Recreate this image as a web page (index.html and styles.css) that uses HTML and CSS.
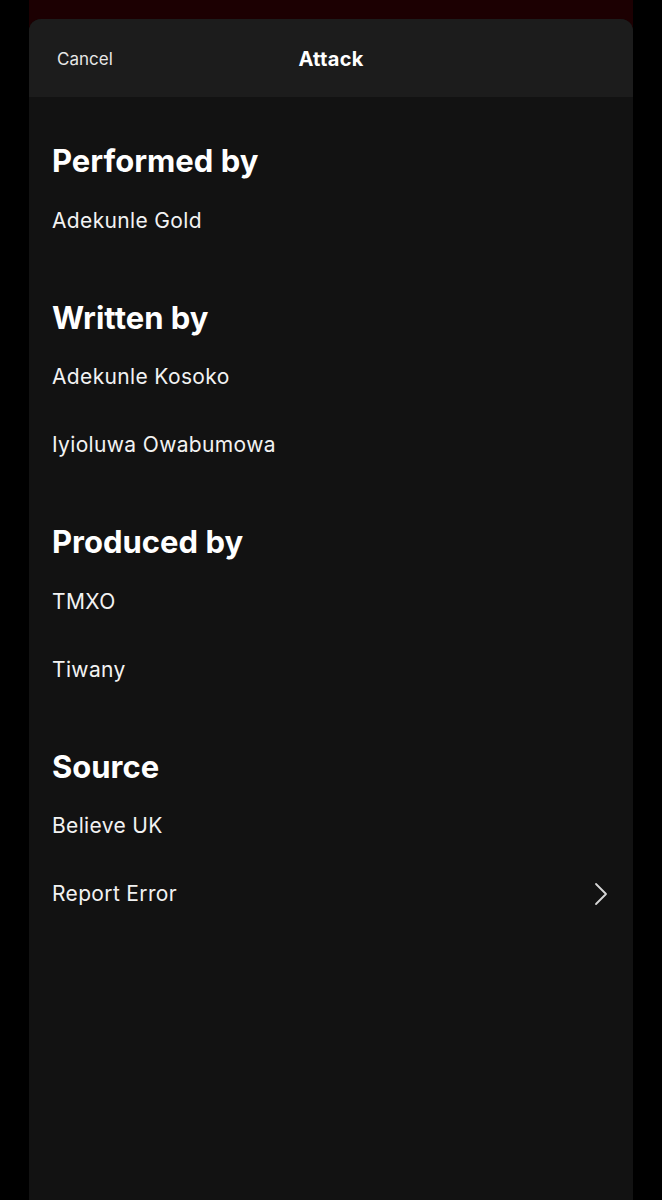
FILE: index.html
```html
<!DOCTYPE html>
<html lang="en">
<head>
<meta charset="utf-8">
<title>Attack – Credits</title>
<link rel="stylesheet" href="styles.css">
</head>
<body>
<div class="page">
  <div class="sheet">
    <header class="sheet-header">
      <span class="cancel">Cancel</span>
      <span class="title">Attack</span>
      <span class="spacer"></span>
    </header>
    <main class="credits">
      <section class="group">
        <h2 class="group-title">Performed by</h2>
        <div class="row">Adekunle Gold</div>
      </section>
      <section class="group">
        <h2 class="group-title">Written by</h2>
        <div class="row">Adekunle Kosoko</div>
        <div class="row">Iyioluwa Owabumowa</div>
      </section>
      <section class="group">
        <h2 class="group-title">Produced by</h2>
        <div class="row">TMXO</div>
        <div class="row">Tiwany</div>
      </section>
      <section class="group">
        <h2 class="group-title">Source</h2>
        <div class="row">Believe UK</div>
        <div class="row row-link">
          <span>Report Error</span>
          <svg class="chev" width="14" height="24" viewBox="0 0 14 24" aria-hidden="true">
            <path d="M2 2 L12 12 L2 22" fill="none" stroke="#d6d6d6" stroke-width="1.8" stroke-linecap="round" stroke-linejoin="round"/>
          </svg>
        </div>
      </section>
    </main>
  </div>
</div>
</body>
</html>
```
FILE: styles.css
```css
* { box-sizing: border-box; }
html, body { margin: 0; padding: 0; background: #000; }
body {
  font-family: "Inter", "Lato", "Liberation Sans", sans-serif;
  color: #fff;
}
.page {
  width: 604px;
  margin: 0 auto;
  padding-top: 19px;
  background: #1c0002;
  min-height: 1200px;
}
.sheet {
  background: #121212;
  border-radius: 12px 12px 0 0;
  min-height: 1181px;
  overflow: hidden;
}
.sheet-header {
  height: 78px;
  background: #1c1c1c;
  display: flex;
  align-items: center;
  padding: 2px 28px 0 28px;
}
.cancel {
  flex: 1;
  font-size: 17px;
  color: #e6e6e6;
}
.title {
  font-size: 20px;
  font-weight: 700;
  letter-spacing: 0.3px;
}
.spacer { flex: 1; }
.credits {
  padding: 41px 23px 0 23px;
}
.group { margin-bottom: 40.5px; }
.group-title {
  margin: 0;
  font-size: 31px;
  font-weight: 700;
  height: 46px;
  line-height: 46px;
  letter-spacing: 0;
}
.row {
  height: 68px;
  display: flex;
  align-items: center;
  font-size: 21px;
  letter-spacing: 0.35px;
  color: #f2f2f2;
}
.group-title + .row { margin-top: 2px; }
.row-link { justify-content: space-between; padding-right: 2px; }
.chev { display: block; }
```
